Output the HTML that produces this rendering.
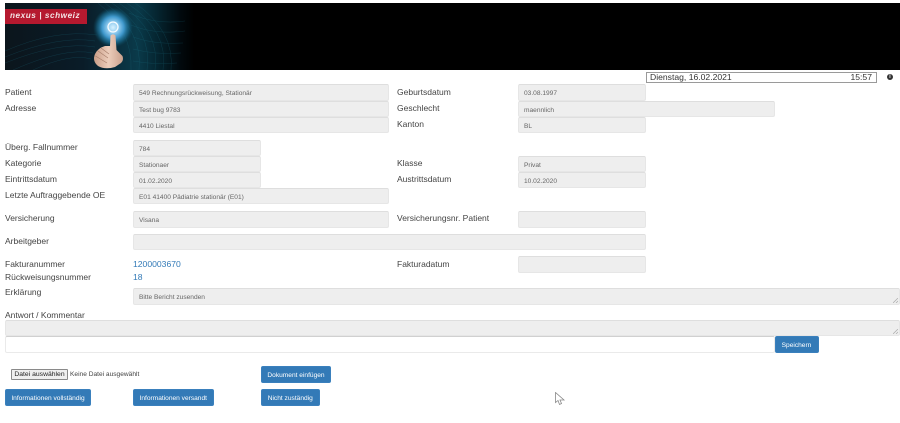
<!DOCTYPE html>
<html lang="de">
<head>
<meta charset="utf-8">
<title>Rechnungsrückweisung</title>
<style>
html,body{margin:0;padding:0;background:#fff;width:900px;height:423px;overflow:hidden}
body{position:relative;font-family:"Liberation Sans",sans-serif;color:#333}
#w{position:absolute;left:0;top:0;width:900px;height:423px;filter:blur(.3px)}
.l{position:absolute;font-size:8.5px;line-height:11px;color:#444;white-space:nowrap}
.f{position:absolute;box-sizing:border-box;background:#eee;border:1px solid #e6e6e6;border-top-color:#dedede;border-radius:2px;font-size:6.6px;line-height:18px;padding-left:5px;color:#666;white-space:nowrap}
.a{position:absolute;font-size:8.6px;line-height:11px;color:#337ab7}
.b{position:absolute;box-sizing:border-box;background:#337ab7;border:1px solid #3a80bd;border-radius:2px;color:#fff;font-size:6.6px;line-height:18px;text-align:center;white-space:nowrap}
.g{position:absolute;right:1px;bottom:1px}
</style>
</head>
<body>
<div id="w">
<!-- header -->
<div style="position:absolute;left:5px;top:3px;width:895px;height:67px;background:#000"></div>
<div style="position:absolute;left:5px;top:3px;width:195px;height:67px;overflow:hidden;background:linear-gradient(90deg,#0b151c 0,#0a1c28 40%,#0a2f3e 58%,#0a3a4a 68%,#052530 78%,#01090d 90%,#000 97%)">
  <svg width="195" height="67" viewBox="0 0 195 67" style="position:absolute;left:0;top:0">
    <defs>
      <radialGradient id="gl" cx="50%" cy="50%" r="50%">
        <stop offset="0" stop-color="#d8f2ff"/>
        <stop offset=".3" stop-color="#8cc9ee"/>
        <stop offset=".55" stop-color="#3f98cc"/>
        <stop offset=".8" stop-color="#1a6f94" stop-opacity=".6"/>
        <stop offset="1" stop-color="#0e4f66" stop-opacity="0"/>
      </radialGradient>
      <linearGradient id="hd" x1="0" y1="0" x2="1" y2="0">
        <stop offset="0" stop-color="#c99d87"/>
        <stop offset=".5" stop-color="#eccdbb"/>
        <stop offset="1" stop-color="#c9a08c"/>
      </linearGradient>
    </defs>
    <g stroke="#1f7f94" stroke-width=".5" fill="none" opacity=".28">
      <path d="M0 48Q50 26 92 32M0 54Q55 32 90 38M0 60Q55 38 90 44M8 67Q60 44 88 50M28 67Q65 50 86 56"/>
      <path d="M93 0Q128 28 126 67M100 0Q138 28 134 67M107 0Q148 28 142 67M114 0Q156 28 150 67M122 0Q164 28 158 67M130 0Q170 28 166 67"/>
      <path d="M124 10Q150 22 180 18M126 22Q150 32 180 28M128 34Q150 42 178 40M128 46Q150 52 176 50M128 58Q150 62 172 60"/>
    </g>
    <circle cx="108" cy="24.500" r="20" fill="url(#gl)"/>
    <circle cx="108" cy="24" r="5" fill="none" stroke="#f6fcff" stroke-width="1.300"/>
    <path d="M105.500 32.500Q108 30 110.500 32.500L111.500 47L117.500 53Q119 57 116 60L110 64Q100 67 93 63Q87 58 90 51Q93 45 100 43L105 43Z" fill="url(#hd)"/>
    <path d="M93 48L103 55M90.500 53L102 60M96 45L104 51" stroke="#a87f6c" stroke-width=".7" fill="none"/>
  </svg>
  <div style="position:absolute;left:0;top:6px;width:82px;height:14.500px;background:#b5192f;color:#f3e4e6;font:italic bold 8.200px/14.500px 'Liberation Sans',sans-serif;letter-spacing:.55px;padding-left:5px;box-sizing:border-box;white-space:nowrap">nexus | schweiz</div>
</div>

<!-- date bar -->
<div style="position:absolute;left:646px;top:71.500px;width:231px;height:11px;box-sizing:border-box;border:1px solid #9a9a9a;background:#fff;font-size:8.600px;line-height:9px;color:#333;padding:0 4px 0 3px">Dienstag, 16.02.2021<span style="position:absolute;right:4px;top:0">15:57</span></div>
<div style="position:absolute;left:887px;top:74px;width:6px;height:6px;border-radius:50%;background:#333;color:#fff;font:bold 5px/6px 'Liberation Sans',sans-serif;text-align:center">i</div>

<!-- left labels -->
<div class="l" style="left:5px;top:87px">Patient</div>
<div class="l" style="left:5px;top:103px">Adresse</div>
<div class="l" style="left:5px;top:142px">Überg. Fallnummer</div>
<div class="l" style="left:5px;top:158px">Kategorie</div>
<div class="l" style="left:5px;top:174px">Eintrittsdatum</div>
<div class="l" style="left:5px;top:190px">Letzte Auftraggebende OE</div>
<div class="l" style="left:5px;top:213px">Versicherung</div>
<div class="l" style="left:5px;top:236px">Arbeitgeber</div>
<div class="l" style="left:5px;top:259px">Fakturanummer</div>
<div class="l" style="left:5px;top:272px">Rückweisungsnummer</div>
<div class="l" style="left:5px;top:287px">Erklärung</div>
<div class="l" style="left:5px;top:310px">Antwort / Kommentar</div>

<!-- right labels -->
<div class="l" style="left:397px;top:87px">Geburtsdatum</div>
<div class="l" style="left:397px;top:103px">Geschlecht</div>
<div class="l" style="left:397px;top:119px">Kanton</div>
<div class="l" style="left:397px;top:158px">Klasse</div>
<div class="l" style="left:397px;top:174px">Austrittsdatum</div>
<div class="l" style="left:397px;top:213px">Versicherungsnr. Patient</div>
<div class="l" style="left:397px;top:259px">Fakturadatum</div>

<!-- left fields -->
<div class="f" style="left:133px;top:84px;width:256px;height:16.500px">549 Rechnungsrückweisung, Stationär</div>
<div class="f" style="left:133px;top:100.500px;width:256px;height:16px">Test bug 9783</div>
<div class="f" style="left:133px;top:116.500px;width:256px;height:16.500px">4410 Liestal</div>
<div class="f" style="left:133px;top:139.500px;width:128px;height:16px">784</div>
<div class="f" style="left:133px;top:155.500px;width:128px;height:16px">Stationaer</div>
<div class="f" style="left:133px;top:171.500px;width:128px;height:16.500px">01.02.2020</div>
<div class="f" style="left:133px;top:188px;width:256px;height:16px">E01 41400 Pädiatrie stationär (E01)</div>
<div class="f" style="left:133px;top:211px;width:256px;height:16.500px">Visana</div>
<div class="f" style="left:133px;top:233.500px;width:513px;height:16.500px"></div>

<!-- right fields -->
<div class="f" style="left:518px;top:84px;width:128px;height:16.500px">03.08.1997</div>
<div class="f" style="left:518px;top:100.500px;width:257px;height:16px">maennlich</div>
<div class="f" style="left:518px;top:116.500px;width:128px;height:16.500px">BL</div>
<div class="f" style="left:518px;top:155.500px;width:128px;height:16px">Privat</div>
<div class="f" style="left:518px;top:171.500px;width:128px;height:16.500px">10.02.2020</div>
<div class="f" style="left:518px;top:211px;width:128px;height:16.500px"></div>
<div class="f" style="left:518px;top:256px;width:128px;height:16.500px"></div>

<!-- links -->
<div class="a" style="left:133px;top:259px">1200003670</div>
<div class="a" style="left:133px;top:272px">18</div>

<!-- textareas -->
<div class="f" style="left:133px;top:288px;width:767px;height:16.500px">Bitte Bericht zusenden
  <svg class="g" width="5" height="5" viewBox="0 0 5 5"><path d="M0 5L5 0M3 5L5 3" stroke="#aaa" stroke-width=".7"/></svg>
</div>
<div class="f" style="left:5px;top:320px;width:895px;height:16px">
  <svg class="g" width="5" height="5" viewBox="0 0 5 5"><path d="M0 5L5 0M3 5L5 3" stroke="#aaa" stroke-width=".7"/></svg>
</div>
<div style="position:absolute;left:5px;top:336px;width:770px;height:16.500px;box-sizing:border-box;background:#fff;border:1px solid #eaeaea;border-top-color:#d0d0d0;border-radius:2px"></div>
<div class="b" style="left:774.500px;top:336px;width:44px;height:16.500px">Speichern</div>

<!-- file input -->
<div style="position:absolute;left:11px;top:368.500px;width:57px;height:11.500px;box-sizing:border-box;background:#efefef;border:1px solid #8a8a8a;border-radius:1px;font-size:6.800px;line-height:10.500px;text-align:center;color:#222;white-space:nowrap">Datei auswählen</div>
<div style="position:absolute;left:70px;top:370px;font-size:6.600px;line-height:10px;color:#444;white-space:nowrap">Keine Datei ausgewählt</div>

<!-- buttons -->
<div class="b" style="left:261px;top:366px;width:70px;height:16.500px">Dokument einfügen</div>
<div class="b" style="left:5px;top:389px;width:86px;height:16.500px">Informationen vollständig</div>
<div class="b" style="left:133px;top:389px;width:80.500px;height:16.500px">Informationen versandt</div>
<div class="b" style="left:261px;top:389px;width:58.500px;height:16.500px">Nicht zuständig</div>

<!-- cursor -->
<svg style="position:absolute;left:555px;top:392px" width="11" height="14" viewBox="0 0 11 14"><path d="M.5.5V10.500L3 8.500L4.500 12.500L6.500 11.500L5 8H9Z" fill="#fff" stroke="#888" stroke-width=".8"/></svg>
</div>
</body>
</html>
